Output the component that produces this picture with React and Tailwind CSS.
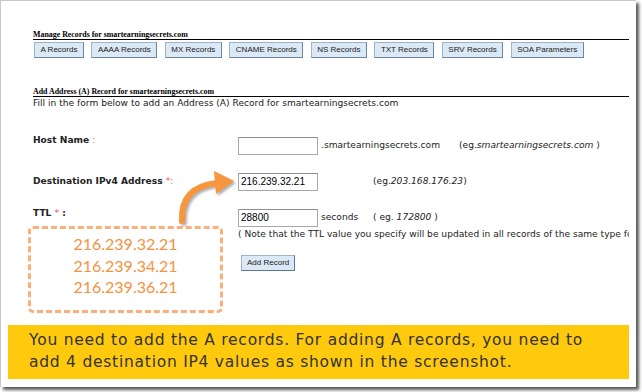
import React from 'react';

const recordTabs = ['A Records', 'AAAA Records', 'MX Records', 'CNAME Records', 'NS Records', 'TXT Records', 'SRV Records', 'SOA Parameters'];

const verdana = { fontFamily: '"DejaVu Sans", Verdana, sans-serif' };
const serif = { fontFamily: '"Liberation Serif", "Times New Roman", serif' };
const arial = { fontFamily: '"Liberation Sans", Arial, sans-serif' };
const gothic = { fontFamily: 'Lato, "Century Gothic", sans-serif' };
const wideGothic = { fontFamily: '"DejaVu Sans", "Century Gothic", sans-serif' };

const TabButton = ({ label }) => (
  <button
    className="h-[16px] px-[5.5px] bg-[#dbe8f5] border border-[#9fb3c8] border-r-[#6f859c] border-b-[#6f859c] text-[8px] leading-none text-[#1a1a1a]"
    style={arial}
  >
    {label}
  </button>
);

const Field = ({ value }) => (
  <div
    className="w-[80px] h-[18px] border border-[#a4a9b0] border-t-[#8a8f96] bg-white pl-[2px] text-[10px] leading-[16px] text-black"
    style={arial}
  >
    {value}
  </div>
);

const Arrow = () => (
  <svg className="absolute left-[170px] top-[163px]" width="70" height="66" viewBox="0 0 70 66">
    <defs>
      <filter id="sh" x="-20%" y="-20%" width="140%" height="140%">
        <feGaussianBlur stdDeviation="1.2" />
      </filter>
    </defs>
    <g transform="translate(2 2)" opacity="0.45" filter="url(#sh)">
      <path d="M11 57 C 10 38, 18 22, 46 19" fill="none" stroke="#555" strokeWidth="6" strokeLinecap="round" />
      <polygon points="43,7 63,17 45,30" fill="#555" />
    </g>
    <path d="M11 57 C 10 38, 18 22, 46 19" fill="none" stroke="#f7963c" strokeWidth="6" strokeLinecap="round" />
    <polygon points="43,7 63,17 45,30" fill="#f7963c" />
  </svg>
);

const App = () => {
  return (
    <div className="w-[642px] h-[392px] bg-white overflow-hidden">
      <div className="relative w-[636px] h-[387px] flex flex-col bg-white border-l border-t border-[#c8c8c8] shadow-[3px_3px_3px_rgba(0,0,0,0.65)] overflow-hidden">
        <div className="pl-[32px] pr-[7px] pt-[29px]">
          <div className="border-b border-black text-[7.9px] font-bold leading-[9px] text-black" style={serif}>
            Manage Records for smartearningsecrets.com
          </div>
          <div className="flex gap-[7.5px] mt-[2px] pl-[1px]">
            {recordTabs.map((t) => (
              <TabButton key={t} label={t} />
            ))}
          </div>

          <div className="mt-[29px] border-b border-black text-[7.9px] font-bold leading-[9px] text-black" style={serif}>
            Add Address (A) Record for smartearningsecrets.com
          </div>
          <div className="text-[9.1px] leading-[12px] text-[#222]" style={verdana}>
            Fill in the form below to add an Address (A) Record for smartearningsecrets.com
          </div>

          <div className="mt-[28px] flex flex-col text-[9.1px] text-[#222]" style={verdana}>
            <div className="flex h-[18px]">
              <div className="w-[205px] font-bold leading-[10px] -mt-[2px]">
                Host Name <span className="font-normal text-[#c08090]">:</span>
              </div>
              <Field value="" />
              <div className="flex items-center pl-[3px]">
                <span className="w-[138px]">.smartearningsecrets.com</span>
                <span>
                  (eg.<i>smartearningsecrets.com</i> )
                </span>
              </div>
            </div>

            <div className="flex h-[18px] mt-[18px] items-center">
              <div className="w-[205px] font-bold">
                Destination IPv4 Address <span className="font-normal text-[#e0506e]">*:</span>
              </div>
              <Field value="216.239.32.21" />
              <span className="ml-[55px]">
                (eg.<i>203.168.176.23</i>)
              </span>
            </div>

            <div className="flex h-[18px] mt-[18px]">
              <div className="w-[205px] font-bold leading-[10px] -mt-[1px]">
                TTL <span className="font-normal text-[#e0506e]">*</span> :
              </div>
              <Field value="28800" />
              <div className="flex items-center pl-[3px]">
                <span className="w-[52px]">seconds</span>
                <span>
                  ( eg. <i>172800</i> )
                </span>
              </div>
            </div>

            <div className="pl-[205px] leading-[14px] whitespace-nowrap overflow-hidden">
              ( Note that the TTL value you specify will be updated in all records of the same type fo
            </div>

            <div className="pl-[208px] mt-[14px]">
              <button
                className="h-[16px] px-[5px] bg-[#dbe8f5] border border-[#9fb3c8] border-r-[#5f7590] border-b-[#5f7590] text-[8px] leading-none text-[#1a1a1a]"
                style={arial}
              >
                Add Record
              </button>
            </div>
          </div>
        </div>

        <div className="absolute left-[27px] top-[225px] w-[195px] h-[87px] border-[3px] border-dashed border-[#f9b07a] rounded-[5px] flex flex-col items-center pt-[4px] text-[16px] leading-[21.5px] text-[#f5923e]" style={gothic}>
          <span>216.239.32.21</span>
          <span>216.239.34.21</span>
          <span>216.239.36.21</span>
        </div>
        <Arrow />

        <div className="mt-auto mx-[7px] mb-[8px] h-[54px] bg-[#ffc90e] pl-[21px] pt-[4px] text-[15.5px] tracking-[0.75px] leading-[22px] text-[#333]" style={wideGothic}>
          You need to add the A records. For adding A records, you need to
          <br />
          add 4 destination IP4 values as shown in the screenshot.
        </div>
      </div>
    </div>
  );
};

export default App;
